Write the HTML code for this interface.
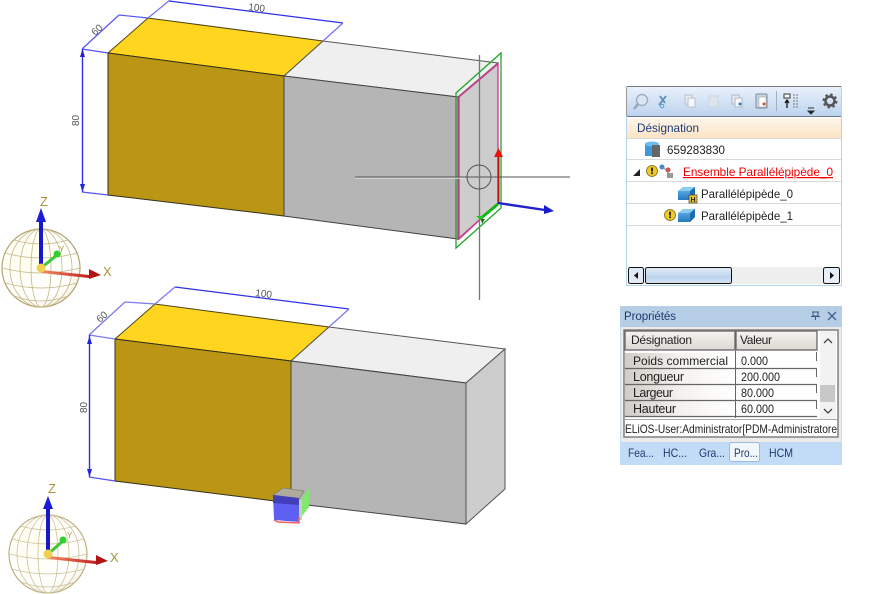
<!DOCTYPE html>
<html><head><meta charset="utf-8"><style>
html,body{margin:0;padding:0;background:#fff;width:872px;height:594px;overflow:hidden}
svg{display:block;position:absolute;left:0;top:0}
text{font-family:"Liberation Sans",sans-serif}
</style></head><body>
<svg width="872" height="594" viewBox="0 0 872 594" xmlns="http://www.w3.org/2000/svg">
<defs>
<linearGradient id="tb" x1="0" y1="0" x2="0" y2="1"><stop offset="0" stop-color="#e9f1fb"/><stop offset="1" stop-color="#bcd3ee"/></linearGradient>
<linearGradient id="hd" x1="0" y1="0" x2="0" y2="1"><stop offset="0" stop-color="#fdf6ec"/><stop offset="1" stop-color="#fde4c4"/></linearGradient>
<linearGradient id="sb" x1="0" y1="0" x2="0" y2="1"><stop offset="0" stop-color="#e6eef9"/><stop offset=".6" stop-color="#bcd2ec"/><stop offset="1" stop-color="#d8e5f5"/></linearGradient>
<linearGradient id="cell" x1="0" y1="0" x2="1" y2="0"><stop offset="0" stop-color="#d0ccc6"/><stop offset=".5" stop-color="#f4f2ef"/><stop offset="1" stop-color="#fff"/></linearGradient>
<linearGradient id="hc" x1="0" y1="0" x2="0" y2="1"><stop offset="0" stop-color="#f5f3f0"/><stop offset="1" stop-color="#dcd8d2"/></linearGradient>
<linearGradient id="bk" x1="0" y1="0" x2="0" y2="1"><stop offset="0" stop-color="#6db8ec"/><stop offset="1" stop-color="#2579bf"/></linearGradient>
<linearGradient id="rd" x1="0" y1="0" x2="1" y2="0"><stop offset="0" stop-color="#f08a60"/><stop offset="1" stop-color="#c01c1c"/></linearGradient>
<radialGradient id="sph" cx=".35" cy=".35" r=".8"><stop offset="0" stop-color="#fffef0"/><stop offset=".7" stop-color="#fff"/><stop offset="1" stop-color="#f1ecdc"/></radialGradient>
<g id="globe">
<circle cx="0" cy="0" r="39" fill="url(#sph)" stroke="#b3a46e" stroke-width="1.200"/>
<g fill="none" stroke="#c4b784" stroke-width=".8">
<ellipse cx="0" cy="0" rx="10" ry="39"/><ellipse cx="0" cy="0" rx="21" ry="39"/><ellipse cx="0" cy="0" rx="31" ry="39"/>
<path d="M-27-28Q0-20 27-28M-36-15Q0-5 36-15M-39 0Q0 10 39 0M-36 15Q0 25 36 15M-27 28Q0 38 27 28"/>
</g></g>
<g id="wrn"><circle cx="0" cy="0" r="5.500" fill="#eec92a" stroke="#7c6a10" stroke-width=".8"/><rect x="-.9" y="-3.400" width="1.800" height="4" fill="#222"/><rect x="-.9" y="1.400" width="1.800" height="1.700" fill="#222"/></g>
<g id="blk"><path d="M0 3L5-1L17-1L17 7L12 12L0 12Z" fill="url(#bk)"/><path d="M0 3L5-1L17-1L12 3Z" fill="#8accf2"/><path d="M12 3L17-1L17 7L12 12Z" fill="#1c6db0"/></g>
</defs>

<!-- TOP BOX -->
<polygon points="108,53 148,18 323,41 284,76" fill="#ffd51f" stroke="#4b4214" stroke-width="1"/>
<polygon points="108,53 284,76 284,216 108,195" fill="#bb9614" stroke="#33301c" stroke-width="1"/>
<polygon points="284,76 323,41 498,63 458,97" fill="#efefef" stroke="#555" stroke-width="1"/>
<polygon points="284,76 458,97 458,239 284,216" fill="#b5b5b5" stroke="#444" stroke-width="1"/>
<polygon points="458,97 498,63 498,203 458,239" fill="#cdcdcd" stroke="#555" stroke-width="1"/>
<polygon points="459,97 498,64 498,203 459,239" fill="none" stroke="#e0359b" stroke-width="1.400"/>
<polygon points="456,93 501,53 501,208 456,248" fill="none" stroke="#1fa52a" stroke-width="1.300"/>
<!-- top dims -->
<g fill="none" stroke="#3030e8" stroke-width="1.200">
<path d="M169 1L343 23" stroke-width="1.300"/><path d="M343 23L323 41" stroke="#7070f0"/><path d="M148 18L170 0" stroke="#7070f0"/>
<path d="M82 49L119 15" stroke="#5555f0"/><path d="M119 15L148 18" stroke="#5555f0"/><path d="M82 49L108 53" stroke="#5555f0"/>
<path d="M82.500 49V192" stroke-width="1.400"/><path d="M82 192L108 195" stroke="#5555f0"/>
</g>
<path d="M82.500 49l-2.500 8h5zM82.500 192l-2.500-8h5z" fill="#2222dd"/>
<text transform="translate(248,10) rotate(7)" font-size="10" fill="#555">100</text>
<text transform="translate(95,36) rotate(-42)" font-size="10" fill="#555">60</text>
<text transform="translate(79,126) rotate(-90)" font-size="10" fill="#555">80</text>

<!-- crosshair and triad -->
<path d="M355 177H570" stroke="#555" stroke-width="1"/><path d="M355 178.200H466" stroke="#ddd" stroke-width="1"/>
<path d="M479.500 55V300" stroke="#777" stroke-width="1.300"/>
<circle cx="479" cy="177" r="12" fill="none" stroke="#555" stroke-width="1"/>
<path d="M498.500 203V155" stroke="#c01010" stroke-width="2"/><path d="M494 157L498.500 148L503 157Z" fill="#ee1111"/>
<path d="M498 203L545 210" stroke="#2222cc" stroke-width="2.400"/><path d="M544 205L554 211L544 214Z" fill="#1a1ad0"/>
<path d="M498 204L480 219" stroke="#14b814" stroke-width="3"/><path d="M476 216L483 216L483 222Z" fill="#25c025"/><path d="M481 219L485 219L482 224Z" fill="#136b13"/>

<!-- BOTTOM BOX -->
<polygon points="115,339 155,304 329,327 291,361" fill="#ffd51f" stroke="#4b4214" stroke-width="1"/>
<polygon points="115,339 291,361 291,503 115,481" fill="#bb9614" stroke="#33301c" stroke-width="1"/>
<polygon points="291,361 329,327 505,349 466,383" fill="#efefef" stroke="#555" stroke-width="1"/>
<polygon points="291,361 466,383 466,524 291,503" fill="#b5b5b5" stroke="#444" stroke-width="1"/>
<polygon points="466,383 505,349 505,489 466,524" fill="#cdcdcd" stroke="#555" stroke-width="1"/>
<g fill="none" stroke="#3030e8" stroke-width="1.200">
<path d="M175 287L349 309" stroke-width="1.300"/><path d="M349 309L329 327" stroke="#7878f0"/><path d="M155 304L175 287" stroke="#7878f0"/>
<path d="M89 335L125 302" stroke="#7878f0"/><path d="M125 302L155 304" stroke="#7878f0"/><path d="M89 335L115 339" stroke="#7878f0"/>
<path d="M89.500 335V477" stroke-width="1.400"/><path d="M89 477L115 481" stroke="#5555f0"/>
</g>
<path d="M89.500 336l-2.500 8h5zM89.500 477l-2.500-8h5z" fill="#2222dd"/>
<text transform="translate(255,296) rotate(7)" font-size="10" fill="#555">100</text>
<text transform="translate(100,323) rotate(-42)" font-size="10" fill="#555">60</text>
<text transform="translate(87,413) rotate(-90)" font-size="10" fill="#555">80</text>

<!-- small manipulator cube -->
<polygon points="273,495 283,488 304,491 299,499" fill="#b0ac9c" stroke="#85836f" stroke-width=".8"/>
<polygon points="299,503 309,488 309,507 299,520" fill="#7fe86d"/>
<rect x="299" y="500" width="3" height="20" fill="#c8cfc0"/>
<polygon points="273,495 299,498 299,522 274,520" fill="#5f5ff2"/>
<polygon points="273,495 299,498 299,505 273,503" fill="#4240b8"/>
<path d="M274 520L278 522L299 523L299 517" fill="none" stroke="#f56060" stroke-width="1.500"/>

<!-- GLOBE 1 -->
<use href="#globe" transform="translate(41,268)"/>
<path d="M41 268V216" stroke="#1818c8" stroke-width="4"/><path d="M36 222L41 208L46 222Z" fill="#1c1cd8"/>
<path d="M41 268L57 255" stroke="#3cc838" stroke-width="3"/><circle cx="57" cy="254" r="3.500" fill="#2ed12e"/>
<rect x="42" y="270" width="50" height="3" transform="rotate(6 42 268)" fill="url(#rd)"/><path d="M89 269L101 275L89 279Z" fill="#b01616"/>
<circle cx="41" cy="268" r="4.500" fill="#efd050"/>
<text x="40" y="206" font-size="13" fill="#a8933c">Z</text>
<text x="103" y="276" font-size="13" fill="#a8933c">X</text>
<text x="59" y="252" font-size="8" fill="#a8933c">Y</text>

<!-- GLOBE 2 -->
<g opacity=".85"><use href="#globe" transform="translate(48,554)"/></g>
<path d="M48 554V507" stroke="#1818c8" stroke-width="4"/><path d="M43 509L48 496L53 509Z" fill="#1c1cd8"/>
<path d="M48 554L63 541" stroke="#3cc838" stroke-width="3"/><circle cx="63" cy="540" r="3.500" fill="#2ed12e"/>
<rect x="49" y="556" width="50" height="3" transform="rotate(6 49 554)" fill="url(#rd)"/><path d="M96 555L108 561L96 565Z" fill="#b01616"/>
<circle cx="48" cy="554" r="4.500" fill="#efd050"/>
<text x="48" y="493" font-size="13" fill="#a8933c">Z</text>
<text x="110" y="562" font-size="13" fill="#a8933c">X</text>
<text x="67" y="538" font-size="8" fill="#a8933c">Y</text>

<!-- TREE PANEL -->
<rect x="626.500" y="86.500" width="215" height="199" fill="#fff" stroke="#b4d4ea"/>
<rect x="627" y="87" width="214" height="29" fill="url(#tb)"/>
<path d="M627 86.500H841" stroke="#777"/><path d="M627 116.500H841" stroke="#6b7785"/>
<path d="M626.500 87V116" stroke="#999"/>
<!-- toolbar icons -->
<circle cx="642" cy="100" r="5.500" fill="#dbe6f4" stroke="#9db0c2" stroke-width="1.500"/><path d="M638 104L634 109" stroke="#9aa5b5" stroke-width="2.500"/>
<path d="M666 96L659 105M660 96L665 103" stroke="#5f8db8" stroke-width="1.800"/><circle cx="662" cy="106" r="1.800" fill="none" stroke="#5f98c8"/>
<rect x="685" y="95" width="7" height="9" fill="#e8edf3" stroke="#b8c0ca"/><rect x="688" y="98" width="7" height="9" fill="#f5f7fa" stroke="#b8c0ca"/>
<rect x="709" y="96" width="9" height="11" fill="#dde4ec" stroke="#ccd4dc"/>
<rect x="732" y="95" width="7" height="9" fill="#e8edf3" stroke="#b0b8c2"/><rect x="735" y="98" width="7" height="9" fill="#f5f7fa" stroke="#b0b8c2"/><circle cx="740" cy="104" r="1.500" fill="#2a80d0"/>
<rect x="756" y="94" width="11" height="14" rx="1" fill="#c9d4e2" stroke="#7d8a98"/><rect x="759" y="97" width="7" height="10" fill="#fff" stroke="#999" stroke-width=".5"/><circle cx="764" cy="104" r="1.500" fill="#d84a20"/>
<path d="M776.500 91V111" stroke="#9fb0c4"/>
<rect x="784" y="94" width="6" height="4" fill="#fff" stroke="#333"/>
<path d="M787 108V101M785 103L787 100L789 103" stroke="#111" stroke-width="1.300" fill="none"/>
<path d="M793 95H799M793 98H799M793 101H799M793 104H799M793 107H799" stroke="#777" stroke-dasharray="2 1"/>
<path d="M808 108H814M808 111L811 114L814 111Z" stroke="#333" fill="#111"/>
<circle cx="830" cy="101" r="4.500" fill="none" stroke="#555" stroke-width="2.500"/><circle cx="830" cy="101" r="6.500" fill="none" stroke="#555" stroke-width="2" stroke-dasharray="2.500 2.600"/>
<!-- header -->
<rect x="627" y="118" width="214" height="20" fill="url(#hd)"/>
<path d="M627 138.500H841M627 159.500H841M627 181.500H841M627 203.500H841M627 225.500H841" stroke="#d9d9d9"/>
<text x="637" y="132" font-size="12" fill="#1e3a78" textLength="62" lengthAdjust="spacingAndGlyphs">Désignation</text>
<!-- rows -->
<rect x="645" y="143" width="10" height="13" fill="#3d9ad8"/><ellipse cx="652" cy="144" rx="7" ry="2.500" fill="#6dbcec"/><rect x="652" y="145" width="8" height="12" fill="#666"/>
<text x="667" y="154" font-size="12" fill="#222" textLength="58" lengthAdjust="spacingAndGlyphs">659283830</text>
<path d="M633 176L640 169V176Z" fill="#222"/>
<use href="#wrn" transform="translate(652,171)"/>
<circle cx="662" cy="167" r="2.500" fill="#3c8ad0"/><circle cx="668" cy="170" r="2.500" fill="#d84a4a"/><rect x="667" y="173" width="6" height="5" fill="#999"/><path d="M662 167L668 171V175" stroke="#888" fill="none"/>
<text x="683" y="176" font-size="12" fill="#f00000" text-decoration="underline" textLength="150" lengthAdjust="spacingAndGlyphs">Ensemble Parallélépipède_0</text>
<use href="#blk" transform="translate(678,188)"/>
<rect x="689" y="195" width="8" height="8" fill="#e8c42a" stroke="#444" stroke-width=".7"/><text x="690.500" y="202" font-size="7" font-weight="bold" fill="#222">H</text>
<text x="701" y="198" font-size="12" fill="#222" textLength="92" lengthAdjust="spacingAndGlyphs">Parallélépipède_0</text>
<use href="#wrn" transform="translate(670,215)"/>
<use href="#blk" transform="translate(678,210)"/>
<text x="701" y="220" font-size="12" fill="#222" textLength="92" lengthAdjust="spacingAndGlyphs">Parallélépipède_1</text>
<!-- h scrollbar -->
<rect x="628" y="267" width="212" height="17" fill="#eee"/>
<rect x="628.500" y="267.500" width="15" height="16" rx="2" fill="#e0e9f5" stroke="#111"/>
<path d="M638 272V279L634 275.500Z" fill="#111"/>
<rect x="645.500" y="267.500" width="86" height="16" rx="2" fill="url(#sb)" stroke="#111"/>
<rect x="823.500" y="267.500" width="16" height="16" rx="2" fill="#e8eef8" stroke="#111"/>
<path d="M830 272V279L834 275.500Z" fill="#111"/>

<!-- PROPERTIES PANEL -->
<rect x="620" y="306" width="222" height="159" fill="#c2dcf8"/>
<rect x="620" y="306" width="222" height="21" fill="#b6cde6"/>
<text x="624" y="320" font-size="11.500" fill="#1f3a70" textLength="52" lengthAdjust="spacing">Propriétés</text>
<path d="M812 312H819M813 312V316H818V312M815.500 316V320M811 316.500H820" stroke="#385a84" fill="none"/>
<path d="M828 312L836 320M836 312L828 320" stroke="#3d5f8c" stroke-width="1.300"/>
<rect x="621" y="327" width="220" height="115" fill="#ecebe8"/>
<rect x="624" y="330" width="214" height="107" fill="#fff" stroke="#808080" stroke-width="1.500"/>
<rect x="625" y="331" width="110" height="19" fill="url(#hc)" stroke="#666" stroke-width="1.300"/>
<rect x="736" y="331" width="81" height="19" fill="url(#hc)" stroke="#666" stroke-width="1.300"/>
<text x="631" y="344" font-size="12" fill="#222" textLength="61" lengthAdjust="spacing">Désignation</text>
<text x="740" y="344" font-size="12" fill="#222" textLength="32" lengthAdjust="spacing">Valeur</text>
<rect x="625" y="351" width="195" height="67" fill="#fff"/>
<rect x="625" y="353" width="110" height="63" fill="url(#cell)"/>
<path d="M625 368.500H817M625 384.500H817M625 400.500H817M625 416.500H817" stroke="#666" stroke-width="1.300"/>
<path d="M735.500 351V418" stroke="#666"/>
<path d="M816.500 352V417" stroke="#666" stroke-dasharray="9 7"/>
<text x="633" y="365" font-size="12" fill="#222" textLength="95" lengthAdjust="spacing">Poids commercial</text>
<text x="633" y="381" font-size="12.500" fill="#222" textLength="51" lengthAdjust="spacing">Longueur</text>
<text x="633" y="397" font-size="12.500" fill="#222" textLength="40" lengthAdjust="spacing">Largeur</text>
<text x="633" y="413" font-size="12.500" fill="#222" textLength="43" lengthAdjust="spacing">Hauteur</text>
<text x="741" y="365" font-size="12" fill="#222" textLength="27" lengthAdjust="spacingAndGlyphs">0.000</text>
<text x="741" y="381" font-size="12" fill="#222" textLength="39" lengthAdjust="spacingAndGlyphs">200.000</text>
<text x="741" y="397" font-size="12" fill="#222" textLength="33" lengthAdjust="spacingAndGlyphs">80.000</text>
<text x="741" y="413" font-size="12" fill="#222" textLength="33" lengthAdjust="spacingAndGlyphs">60.000</text>
<rect x="820" y="331" width="16" height="88" fill="#f2f2f2"/>
<rect x="820" y="385" width="15" height="17" fill="#c8c8c8"/>
<path d="M824 343L828 339L832 343M824 409L828 413L832 409" fill="none" stroke="#444" stroke-width="1.300"/>
<path d="M625 419.500H837" stroke="#aaa"/>
<text x="625" y="433" font-size="12" fill="#222" textLength="212" lengthAdjust="spacingAndGlyphs">ELiOS-User:Administrator[PDM-Administratore</text>
<rect x="729.500" y="442.500" width="30" height="19" rx="2" fill="#f2f7fc" stroke="#9dbbdc"/>
<g font-size="12" fill="#1f3a70">
<text x="628" y="457" textLength="26" lengthAdjust="spacingAndGlyphs">Fea...</text><text x="663" y="457" textLength="24" lengthAdjust="spacingAndGlyphs">HC...</text><text x="699" y="457" textLength="26" lengthAdjust="spacingAndGlyphs">Gra...</text><text x="734" y="457" textLength="24" lengthAdjust="spacingAndGlyphs">Pro...</text><text x="769" y="457" textLength="24" lengthAdjust="spacingAndGlyphs">HCM</text>
</g>
</svg>
</body></html>
